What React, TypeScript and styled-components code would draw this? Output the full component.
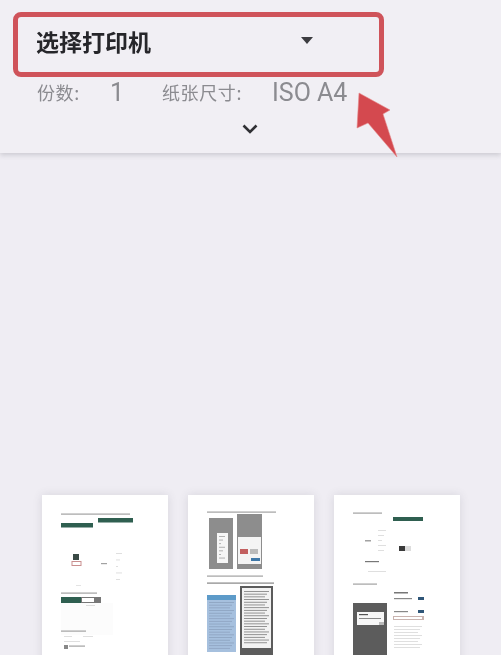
import { createGlobalStyle } from "styled-components";
import styled from "styled-components";

const GlobalStyle = createGlobalStyle`
  html, body {
    margin: 0;
    padding: 0;
    background: #efedf3;
    font-family: Roboto, "Noto Sans CJK SC", sans-serif;
  }
`;

const Screen = styled.div`
  position: relative;
  width: 501px;
  height: 655px;
  overflow: hidden;
  background: #efedf3;
  filter: blur(0.35px);
`;

const Header = styled.div`
  box-sizing: border-box;
  height: 153px;
  padding: 12px 0 0 13px;
  background: #f1eff4;
  box-shadow: 0 2px 5px rgba(60, 60, 70, 0.2);
`;

const PrinterBox = styled.div`
  box-sizing: border-box;
  width: 371px;
  height: 65px;
  display: flex;
  align-items: center;
  justify-content: space-between;
  padding: 0 66px 8px 18px;
  border: 5px solid #cf535a;
  border-radius: 8px;
`;

const PrinterName = styled.span`
  font-family: "Noto Sans CJK SC", sans-serif;
  font-size: 23px;
  font-weight: 700;
  color: #26262a;
`;

const Caret = styled.span`
  width: 0;
  height: 0;
  border-left: 6.5px solid transparent;
  border-right: 6.5px solid transparent;
  border-top: 7px solid #3c3c40;
`;

const InfoRow = styled.div`
  display: flex;
  align-items: center;
  height: 30px;
  padding-left: 24px;
  color: #8b8b90;
`;

const Label = styled.span<{ $width: number }>`
  width: ${(p) => p.$width}px;
  font-family: "Noto Sans CJK SC", sans-serif;
  font-size: 18px;
  letter-spacing: 0.6px;
`;

const Value = styled.span<{ $width?: number }>`
  width: ${(p) => (p.$width ? `${p.$width}px` : "auto")};
  font-family: Roboto, sans-serif;
  font-size: 25px;
  letter-spacing: 0;
`;

const ExpandRow = styled.div`
  display: flex;
  width: 474px;
  justify-content: center;
  margin-top: 16px;
`;

const ExpandIcon = styled.svg`
  width: 18px;
  height: 12px;
`;

const Arrow = styled.svg`
  position: absolute;
  left: 350px;
  top: 85px;
  width: 55px;
  height: 80px;
`;

const Pages = styled.div`
  display: grid;
  grid-template-columns: repeat(3, 126px);
  column-gap: 20px;
  padding: 342px 0 0 42px;
`;

const PageCard = styled.div`
  height: 180px;
  background: #fff;
  box-shadow: 0 0 9px rgba(70, 70, 85, 0.14);
`;

const PageArt = styled.svg`
  display: block;
  width: 126px;
  height: 160px;
  filter: blur(0.5px);
`;

type Block = [number, number, number, number, string];

const GREEN = "#2f5f50";
const TEXT = "#a2a2a2";
const PALE = "#dcdcdc";
const GRAY = "#8d8d8d";
const DARK = "#5c5c5c";

const lines = (x: number, y: number, w: number, count: number, step: number, color = PALE): Block[] =>
  Array.from({ length: count }, (_, i) => [x, y + i * step, w - (i % 3) * 2, 0.9, color] as Block);

const pageOne: Block[] = [
  [19, 18.5, 69, 1.2, TEXT],
  [19, 28, 32, 4.5, GREEN],
  [56, 23, 35, 4.5, GREEN],
  [31, 59, 6, 6, "#3a4a45"],
  [29.5, 66, 10, 5, "#c98f8f"],
  [30.5, 67, 8, 3, "#fff"],
  [59, 68, 6, 1.2, TEXT],
  ...lines(74, 58, 6, 5, 6.5),
  [34, 90, 5, 0.8, PALE],
  [19, 97.5, 36, 1.2, TEXT],
  [19, 102, 40, 6, "#777"],
  [19, 102, 20, 6, GREEN],
  [40, 103, 12, 4, "#fff"],
  [19, 108, 52, 32, "#fcfcfc"],
  [44, 110, 9, 1, PALE],
  [19, 135.5, 25, 1.2, TEXT],
  [22, 141, 8, 0.9, PALE],
  [41, 141, 10, 0.9, PALE],
  [22, 146, 16, 0.9, PALE],
  [22, 150, 4, 4, "#888"],
  [27, 150.5, 16, 1.2, TEXT],
];

const pageTwo: Block[] = [
  [19, 16.5, 69, 1.2, TEXT],
  [21, 23, 24, 51, GRAY],
  [49, 19, 25, 55, GRAY],
  [29, 38, 11, 30, "#f6f6f6"],
  ...lines(31, 41, 6, 7, 3.6, "#aaa"),
  [50, 42, 23, 27, "#f4f4f4"],
  [52, 54, 8, 5, "#c25f5f"],
  [62, 54, 8, 5, "#bbb"],
  [63, 63, 9, 3, "#3f78a8"],
  [19, 80.5, 56, 1.2, TEXT],
  [19, 87.5, 67, 1.2, "#858585"],
  [19, 100, 29, 57, "#a6c0de"],
  [19, 100, 29, 5, "#5d9bc9"],
  ...lines(21, 107, 25, 18, 2.7, "#8fa5c2"),
  [52, 91, 33, 69, DARK],
  [54, 93, 29, 60, "#f2f2f2"],
  ...lines(56, 96, 25, 20, 2.7, "#888"),
];

const pageThree: Block[] = [
  [19, 17.5, 29, 1.2, TEXT],
  [59, 22, 30, 4, GREEN],
  [31, 45, 6, 1.5, TEXT],
  ...lines(44, 35, 8, 5, 5),
  [65, 51, 6, 5, "#3a3a3a"],
  [71, 51, 6, 5, "#ddd"],
  [31, 66, 14, 1.2, "#777"],
  [34, 76, 18, 0.9, PALE],
  [19, 88.5, 24, 1.2, TEXT],
  [60, 97, 14, 1.5, "#777"],
  [60, 103, 18, 1.2, "#888"],
  [84, 102, 6, 3, "#2f5678"],
  [60, 116, 14, 1.2, "#888"],
  [84, 115, 6, 3, "#2f5678"],
  [59, 121, 31, 4, "#c9b4b0"],
  [60, 122, 28, 2, "#fff"],
  ...lines(60, 131, 28, 8, 3),
  [19, 108, 34, 52, DARK],
  [23, 117, 27, 13, "#f7f7f7"],
  [25, 119, 9, 1.2, "#555"],
  [25, 123, 22, 1, "#888"],
  [45, 127, 5, 3, "#bbb"],
];

const pages = [pageOne, pageTwo, pageThree];

const App = () => {
  return (
    <Screen>
      <GlobalStyle />
      <Header>
        <PrinterBox>
          <PrinterName>选择打印机</PrinterName>
          <Caret />
        </PrinterBox>
        <InfoRow>
          <Label $width={73}>份数:</Label>
          <Value $width={52}>1</Value>
          <Label $width={110}>纸张尺寸:</Label>
          <Value>ISO A4</Value>
        </InfoRow>
        <ExpandRow>
          <ExpandIcon viewBox="0 0 18 12">
            <path d="M2.5 2.5 L9 9 L15.5 2.5" fill="none" stroke="#303034" strokeWidth="2.6" />
          </ExpandIcon>
        </ExpandRow>
      </Header>
      <Pages>
        {pages.map((blocks, i) => (
          <PageCard key={i}>
            <PageArt viewBox="0 0 126 160">
              {blocks.map(([x, y, w, h, fill], j) => (
                <rect key={j} x={x} y={y} width={w} height={h} fill={fill} />
              ))}
            </PageArt>
          </PageCard>
        ))}
      </Pages>
      <Arrow viewBox="0 0 55 80">
        <path d="M9 8 L40 25 L33 29 L47 72 L18 38 L7 43 Z" fill="#d4494f" stroke="#e58a8c" strokeWidth="0.6" />
      </Arrow>
    </Screen>
  );
};

export default App;
